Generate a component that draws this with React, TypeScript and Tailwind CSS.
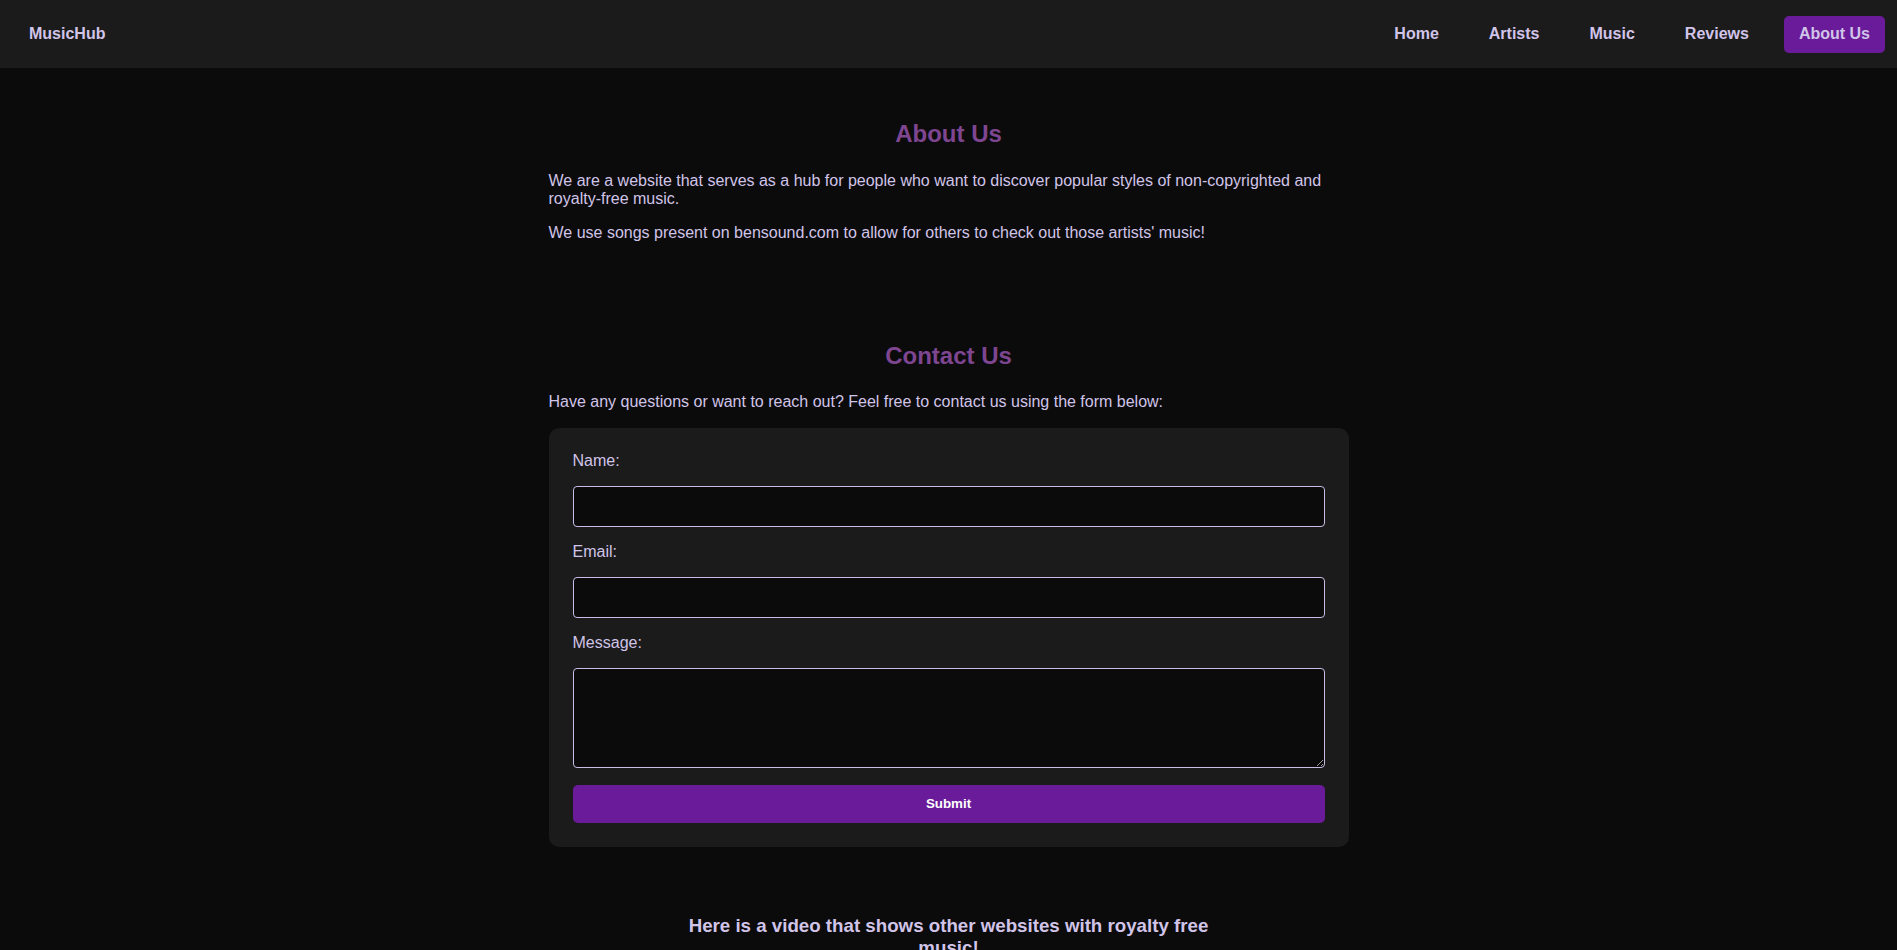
export default function App() {
  const links = ["Home", "Artists", "Music", "Reviews", "About Us"];

  return (
    <div className="min-h-screen bg-[#0b0b0b] font-['Liberation_Sans',Arial,sans-serif] text-[#d1c4e9]">
      <nav className="flex h-[68px] items-center justify-between bg-[#1b1b1b] pl-[29px] pr-3">
        <span className="text-base font-bold">MusicHub</span>
        <ul className="flex items-center gap-5">
          {links.map((l) => (
            <li key={l}>
              <a
                href="#"
                className={
                  l === "About Us"
                    ? "flex h-[37px] items-center rounded-[5px] bg-[#6a1b9a] px-[15px] text-base font-bold"
                    : "flex h-[37px] items-center rounded-[5px] px-[15px] text-base font-bold"
                }
              >
                {l}
              </a>
            </li>
          ))}
        </ul>
      </nav>

      <main className="mx-auto w-[800px] pt-[52px] pb-16">
        <section>
          <h2 className="mb-[25px] text-center text-[24px] font-bold leading-[27px] text-[#7e4591]">About Us</h2>
          <p className="text-base leading-[18px]">
            We are a website that serves as a hub for people who want to discover popular styles of non-copyrighted and
            royalty-free music.
          </p>
          <p className="mt-4 text-base leading-[18px]">
            We use songs present on bensound.com to allow for others to check out those artists' music!
          </p>
        </section>

        <section className="mt-[100px]">
          <h2 className="mb-6 text-center text-[24px] font-bold leading-[27px] text-[#7e4591]">Contact Us</h2>
          <p className="text-base leading-[18px]">
            Have any questions or want to reach out? Feel free to contact us using the form below:
          </p>
          <form className="mt-[17px] flex flex-col gap-4 rounded-[10px] bg-[#1b1b1b] p-6" onSubmit={(e) => e.preventDefault()}>
            <label htmlFor="name" className="text-base leading-[18px]">Name:</label>
            <input
              id="name"
              type="text"
              className="h-[41px] w-full rounded-[4px] border border-[#c9bde6] bg-[#0b0b0b] px-2.5 text-[#d1c4e9] outline-none"
            />
            <label htmlFor="email" className="text-base leading-[18px]">Email:</label>
            <input
              id="email"
              type="email"
              className="h-[41px] w-full rounded-[4px] border border-[#c9bde6] bg-[#0b0b0b] px-2.5 text-[#d1c4e9] outline-none"
            />
            <label htmlFor="message" className="text-base leading-[18px]">Message:</label>
            <textarea
              id="message"
              className="h-[100px] w-full rounded-[4px] border border-[#c9bde6] bg-[#0b0b0b] p-2.5 text-[#d1c4e9] outline-none"
            />
            <button
              type="submit"
              className="mt-px h-[38px] w-full rounded-[5px] bg-[#6a1b9a] text-[13.33px] font-bold text-white"
            >
              Submit
            </button>
          </form>
        </section>

        <section className="mx-auto mt-[68px] w-[560px] text-center">
          <h3 className="text-[18.72px] font-bold leading-[21.5px]">
            Here is a video that shows other websites with royalty free music!
          </h3>
          <div className="mt-5 h-[315px] w-[560px] rounded-[6px] bg-[#1b1b1b]" />
        </section>
      </main>
    </div>
  );
}
